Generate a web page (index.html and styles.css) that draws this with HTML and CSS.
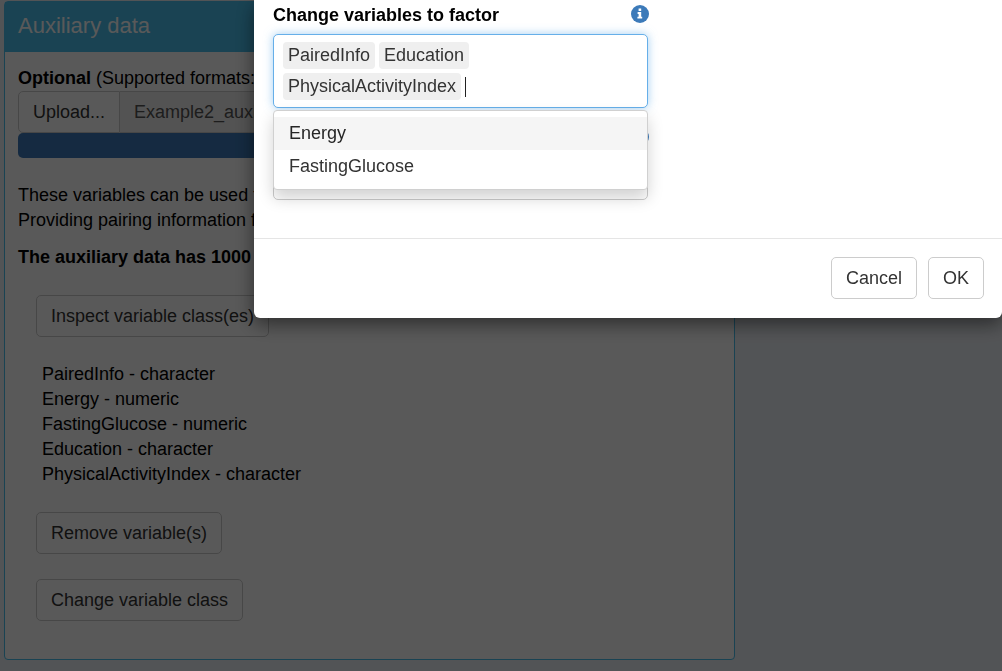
FILE: index.html
```html
<!DOCTYPE html>
<html lang="en">
<head>
<meta charset="utf-8">
<meta name="viewport" content="width=device-width, initial-scale=1">
<title>Auxiliary data</title>
<link rel="stylesheet" href="styles.css">
</head>
<body>
<main class="page">
  <section class="panel">
    <h1 class="panel-title">Auxiliary data</h1>
    <div class="panel-body">
      <label class="line" for="file-name"><b>Optional</b> (Supported formats: csv)</label>
      <div class="upload">
        <button class="btn upload-btn" type="button">Upload...</button>
        <input class="upload-name" id="file-name" type="text" value="Example2_auxiliary" readonly>
      </div>
      <div class="progress"></div>
      <p class="note">These variables can be used for<br>Providing pairing information for</p>
      <p class="summary">The auxiliary data has 1000 rows</p>
      <div class="actions">
        <button class="btn" type="button">Inspect variable class(es)</button>
        <ul class="classes">
          <li>PairedInfo - character</li>
          <li>Energy - numeric</li>
          <li>FastingGlucose - numeric</li>
          <li>Education - character</li>
          <li>PhysicalActivityIndex - character</li>
        </ul>
        <button class="btn" type="button">Remove variable(s)</button>
        <button class="btn" type="button">Change variable class</button>
      </div>
    </div>
  </section>
</main>

<div class="backdrop">
  <div class="modal" role="dialog" aria-modal="true" aria-labelledby="factor-label">
    <div class="modal-body">
      <div class="field">
        <div class="field-head">
          <label id="factor-label" for="factor-input">Change variables to factor</label>
          <svg class="info" viewBox="0 0 18 18" aria-hidden="true"><circle cx="9" cy="9" r="9" fill="#3c7ab9"/><path fill="#fff" d="M7.6 3.6h2.6v2.3H7.6zM6.6 7.1h3.6v4.6h1v1.9H6.4v-1.9h1.2V9h-1z"/></svg>
        </div>
        <div class="picker">
          <div class="picker-box">
            <span class="tag">PairedInfo</span>
            <span class="tag">Education</span>
            <span class="tag">PhysicalActivityIndex</span>
            <input class="picker-input" id="factor-input" type="text">
          </div>
          <div class="menu" role="listbox" aria-labelledby="factor-label">
            <div class="option option-active" role="option" aria-selected="true">Energy</div>
            <div class="option" role="option" aria-selected="false">FastingGlucose</div>
          </div>
        </div>
      </div>
      <div class="field">
        <div class="field-head field-head-end">
          <svg class="info" viewBox="0 0 18 18" aria-hidden="true"><circle cx="9" cy="9" r="9" fill="#3c7ab9"/></svg>
        </div>
        <input class="text-box" type="text" aria-label="Variables">
      </div>
    </div>
    <div class="modal-footer">
      <button class="btn" type="button">Cancel</button>
      <button class="btn" type="button">OK</button>
    </div>
  </div>
</div>
</body>
</html>
```
FILE: styles.css
```css
* { box-sizing: border-box; }

body {
  margin: 0;
  min-height: 100vh;
  background: #ecf0f5;
  color: #000;
  font: 18px/25px "Liberation Sans", Arial, sans-serif;
  overflow: hidden;
}

button, input { font: inherit; }

.page { padding: 1px 4px; }

.panel {
  width: 73.5%;
  border: 1px solid #4ac0ee;
  border-radius: 4px;
  background: #fff;
  white-space: nowrap;
}

.panel-title {
  margin: 0;
  padding: 11px 13px 14px;
  background: #4ac0ee;
  color: #fff;
  font-size: 22px;
  font-weight: 400;
  line-height: 25px;
}

.panel-body { padding: 14px 13px 38px; }

.line { display: block; }

.btn {
  height: 42px;
  padding: 0 14px;
  border: 1px solid #ccc;
  border-radius: 5px;
  background: #fff;
  color: #333;
}

.upload { display: flex; }
.upload-btn { border-radius: 5px 0 0 5px; }

.upload-name {
  flex: 1;
  min-width: 0;
  height: 42px;
  padding: 0 14px;
  border: 1px solid #ccc;
  border-left: 0;
  border-radius: 0 5px 5px 0;
  background: #eee;
  color: #555;
}

.progress {
  height: 25px;
  border-radius: 5px;
  background: #3c7ab9;
}

.note { margin: 25px 0 12px; }
.summary { margin: 0; font-weight: 700; }

.actions {
  display: flex;
  flex-direction: column;
  align-items: flex-start;
  gap: 25px;
  padding: 25px 18px 0;
}

.classes {
  margin: 0;
  padding: 0 6px;
  list-style: none;
}

.backdrop {
  position: fixed;
  inset: 0;
  display: flex;
  align-items: flex-start;
  padding-left: 254px;
  background: rgba(0, 0, 0, 0.65);
}

.modal {
  flex: 1;
  border-radius: 0 0 6px 6px;
  background: #fff;
  box-shadow: 0 6px 19px rgba(0, 0, 0, 0.5);
}

.modal-body {
  display: flex;
  flex-direction: column;
  gap: 18px;
  padding: 3px 19px 38px;
}

.field { width: 375px; }

.field-head {
  display: flex;
  justify-content: space-between;
  align-items: flex-start;
  height: 25px;
  margin-bottom: 6px;
  font-weight: 700;
}

.field-head-end { justify-content: flex-end; }

.info {
  width: 18px;
  height: 18px;
  margin: 2px -1px 0 0;
}

.picker { position: relative; }

.picker-box {
  display: flex;
  flex-wrap: wrap;
  gap: 4px;
  padding: 7px 9px;
  border: 1px solid #66afe9;
  border-radius: 5px;
  background: #fff;
  box-shadow: 0 0 10px rgba(102, 175, 233, 0.6);
}

.tag {
  padding: 1px 5px;
  border-radius: 4px;
  background: #efefef;
  color: #333;
}

.picker-input {
  width: 20px;
  height: 20px;
  align-self: center;
  padding: 0;
  border: 0;
  border-left: 1px solid #222;
  background: none;
  outline: 0;
}

.menu {
  position: absolute;
  z-index: 1;
  top: calc(100% + 2px);
  left: 0;
  right: 0;
  padding: 6px 0;
  border: 1px solid #d0d0d0;
  border-radius: 4px;
  background: #fff;
  box-shadow: 0 8px 16px rgba(0, 0, 0, 0.18);
}

.option {
  padding: 4px 15px;
  color: #333;
}

.option-active {
  background: #f5f5f5;
  color: #262626;
}

.text-box {
  display: block;
  width: 100%;
  height: 43px;
  border: 1px solid #ccc;
  border-radius: 5px;
}

.modal-footer {
  display: flex;
  justify-content: flex-end;
  gap: 11px;
  padding: 18px 18px 19px;
  border-top: 1px solid #e5e5e5;
}
```
